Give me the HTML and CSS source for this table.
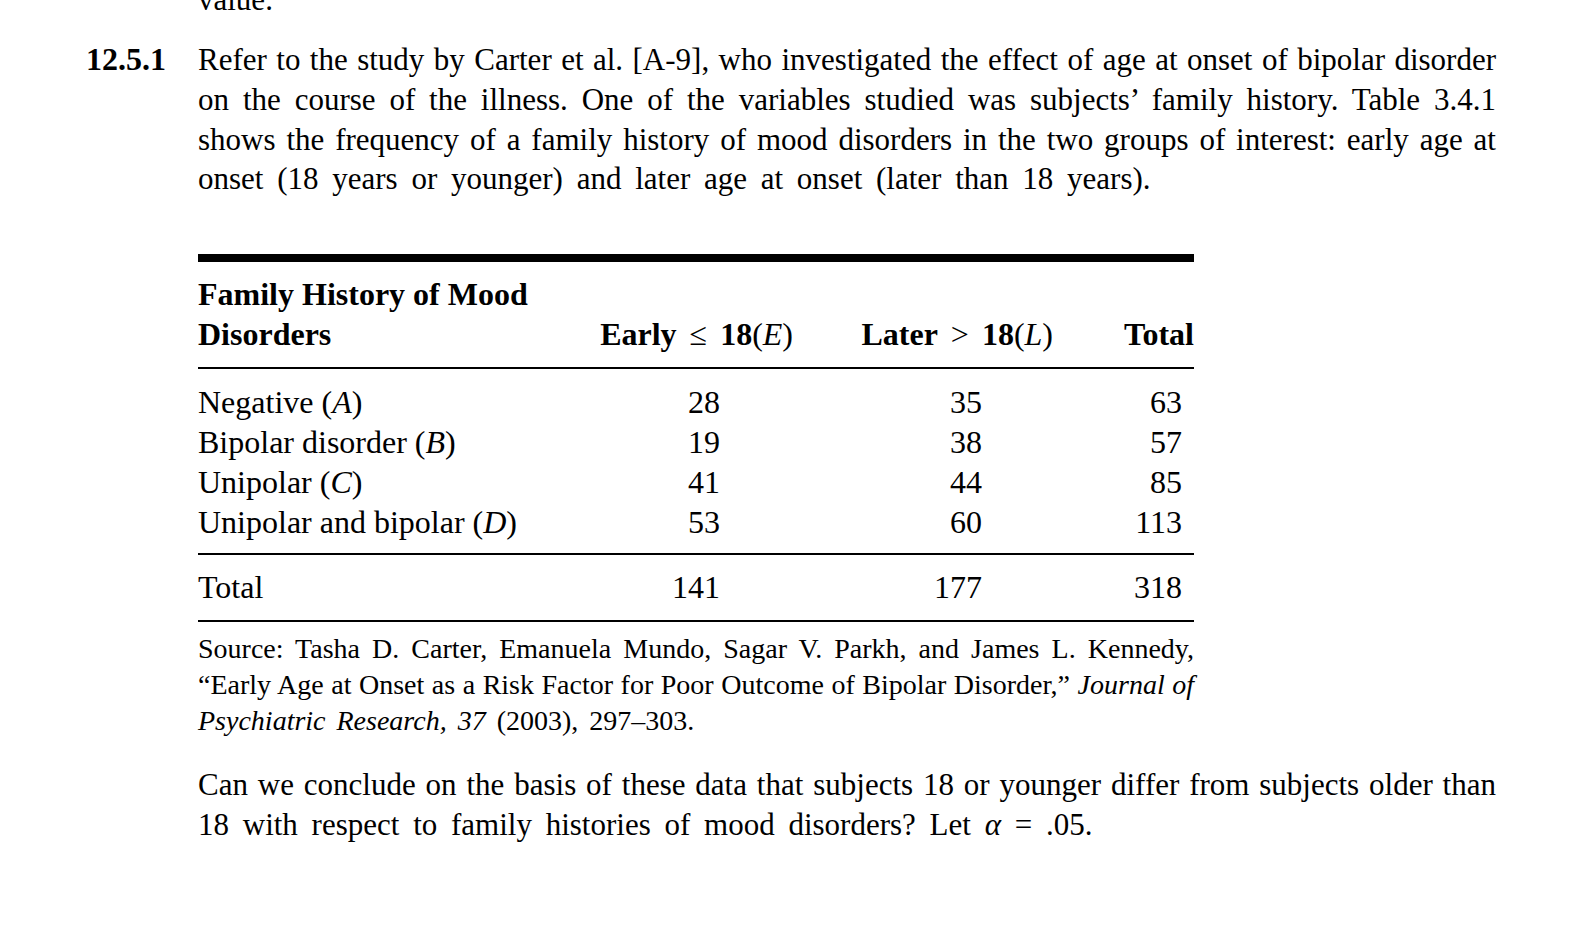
FILE: index.html
```html
<!DOCTYPE html>
<html>
<head>
<meta charset="utf-8">
<link rel="stylesheet" href="styles.css">
</head>
<body>
<div class="page">
  <div class="prev"><span class="prev-text">value.</span></div>
  <div class="exercise">
    <div class="num">12.5.1</div>
    <div class="body">
      <p class="para">
        <span class="jl">Refer to the study by Carter et al. [A-9], who investigated the effect of age at onset of bipolar disorder</span>
        <span class="jl">on the course of the illness. One of the variables studied was subjects’ family history. Table 3.4.1</span>
        <span class="jl">shows the frequency of a family history of mood disorders in the two groups of interest: early age at</span>
        <span class="ll">onset (18 years or younger) and later age at onset (later than 18 years).</span>
      </p>

      <div class="tbl">
        <div class="rule-thick"></div>
        <div class="row head">
          <div class="c lab">Family History of Mood<br>Disorders</div>
          <div class="c h">Early<span class="m rel">≤</span>18<span class="m">(<i>E</i>)</span></div>
          <div class="c h">Later<span class="m rel">&gt;</span>18<span class="m">(<i>L</i>)</span></div>
          <div class="c h">Total</div>
        </div>
        <div class="rule"></div>
        <div class="rows">
          <div class="row data">
            <div class="c lab">Negative (<i>A</i>)</div>
            <div class="c n1">28</div><div class="c n2">35</div><div class="c n3">63</div>
          </div>
          <div class="row data">
            <div class="c lab">Bipolar disorder (<i>B</i>)</div>
            <div class="c n1">19</div><div class="c n2">38</div><div class="c n3">57</div>
          </div>
          <div class="row data">
            <div class="c lab">Unipolar (<i>C</i>)</div>
            <div class="c n1">41</div><div class="c n2">44</div><div class="c n3">85</div>
          </div>
          <div class="row data">
            <div class="c lab">Unipolar and bipolar (<i>D</i>)</div>
            <div class="c n1">53</div><div class="c n2">60</div><div class="c n3">113</div>
          </div>
        </div>
        <div class="rule"></div>
        <div class="row data total">
          <div class="c lab">Total</div>
          <div class="c n1">141</div><div class="c n2">177</div><div class="c n3">318</div>
        </div>
        <div class="rule"></div>
        <p class="source">
          <span class="jl">Source: Tasha D. Carter, Emanuela Mundo, Sagar V. Parkh, and James L. Kennedy,</span>
          <span class="jl">“Early Age at Onset as a Risk Factor for Poor Outcome of Bipolar Disorder,” <i>Journal of</i></span>
          <span class="ll"><i>Psychiatric Research, 37</i> (2003), 297–303.</span>
        </p>
      </div>

      <p class="question">
        <span class="jl">Can we conclude on the basis of these data that subjects 18 or younger differ from subjects older than</span>
        <span class="ll">18 with respect to family histories of mood disorders? Let <i>α</i> = .05.</span>
      </p>
    </div>
  </div>
</div>
</body>
</html>
```

FILE: styles.css
```css
html, body {
  margin: 0;
  padding: 0;
  background: #ffffff;
}
body {
  font-family: "Liberation Serif", "Times New Roman", serif;
  color: #000000;
  width: 1576px;
  height: 926px;
  overflow: hidden;
}
.page {
  padding-left: 86px;
}
.prev {
  margin-top: -20px;
  padding-left: 112px;
  font-size: 31px;
  line-height: 40px;
  height: 40px;
}
.exercise {
  display: flex;
  margin-top: 20px;
}
.num {
  width: 112px;
  flex: none;
  font-weight: bold;
  font-size: 32px;
  line-height: 39.8px;
}
.body {
  width: 1298px;
}
.para {
  margin: 0;
  font-size: 31px;
  line-height: 39.8px;
}
.jl {
  display: block;
  text-align: justify;
  text-align-last: justify;
}
.ll {
  display: block;
  text-align: left;
}
.para .ll,
.question .ll {
  word-spacing: 6px;
}
.tbl {
  width: 996px;
  margin-top: 55px;
}
.rule-thick {
  height: 8px;
  background: #000;
}
.rule {
  height: 2px;
  background: #000;
}
.row {
  display: grid;
  grid-template-columns: 360px 235px 260px 141px;
  align-items: end;
}
.head {
  font-weight: bold;
  font-size: 32px;
  line-height: 40px;
  padding-top: 11.5px;
  padding-bottom: 13.5px;
}
.head .h {
  text-align: right;
  white-space: nowrap;
}
.m {
  font-weight: normal;
}
.rel {
  display: inline-block;
  margin: 0 13px;
}
.rows {
  padding-top: 14px;
  padding-bottom: 10.8px;
}
.data {
  font-size: 32px;
  line-height: 39.8px;
}
.data .lab {
  white-space: nowrap;
}
.n1 { text-align: right; padding-right: 73px; }
.n2 { text-align: right; padding-right: 71px; }
.n3 { text-align: right; padding-right: 12px; }
.total {
  padding-top: 12px;
  padding-bottom: 13px;
  line-height: 40px;
}
.source {
  margin: 9px 0 0 0;
  font-size: 28px;
  line-height: 36px;
}
.source .ll {
  word-spacing: 4px;
}
.question {
  margin: 26px 0 0 0;
  font-size: 31px;
  line-height: 39.5px;
}
```
